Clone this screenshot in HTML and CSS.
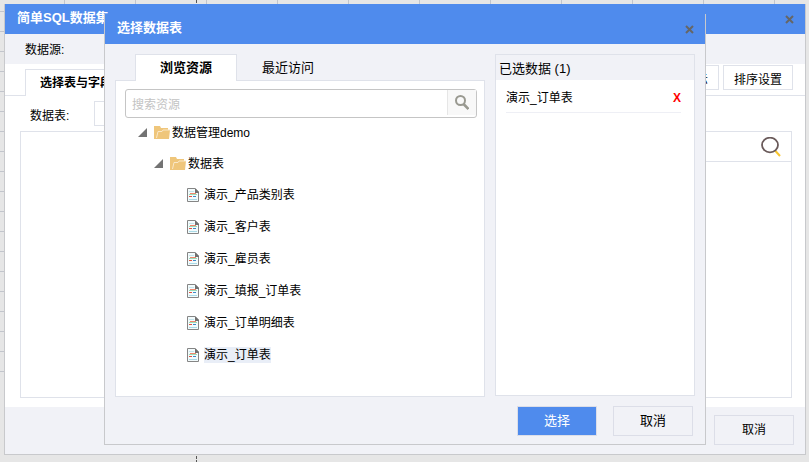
FILE: index.html
```html
<!DOCTYPE html>
<html lang="zh-CN">
<head>
<meta charset="utf-8">
<title>选择数据表</title>
<link rel="stylesheet" href="styles.css">
</head>
<body>
<svg class="sheet" aria-hidden="true">
  <defs>
    <pattern id="cols" x="64" width="71" height="4" patternUnits="userSpaceOnUse"><rect width="1" height="4" fill="#c2c5cc"/></pattern>
    <pattern id="rows" y="11" width="4" height="20" patternUnits="userSpaceOnUse"><rect width="4" height="1" fill="#c2c5cc"/></pattern>
  </defs>
  <rect x="60" width="100%" height="4" fill="url(#cols)"/>
  <rect width="4" height="372" fill="url(#rows)"/>
  <path d="M196.500 0V462" stroke="#555" stroke-dasharray="3 1"/>
</svg>

<main class="dialog dataset">
  <header class="titlebar">
    <h1>简单SQL数据集</h1>
    <button class="close" aria-label="关闭"><svg viewBox="0 0 9 9"><path d="M1 1l7 7M8 1L1 8"/></svg></button>
  </header>
  <div class="source">数据源:</div>
  <div class="workspace">
    <div class="main-tabs">
      <button class="main-tab">选择表与字段</button>
      <div class="actions">
        <button>仅显示</button>
        <button>排序设置</button>
      </div>
    </div>
    <div class="table-field">
      <label for="table">数据表:</label>
      <input id="table" type="text">
    </div>
    <div class="fields">
      <section class="fields-list"></section>
      <section class="fields-chosen">
        <div class="fields-head">
          <button aria-label="搜索"><svg viewBox="0 0 20 20"><path d="M14 13.500l5 5.500" stroke="#f7c52f" stroke-width="2"/><ellipse cx="9" cy="8" rx="8" ry="7.300" fill="none" stroke="#6a5a5a" stroke-width="1.800"/></svg></button>
        </div>
      </section>
    </div>
  </div>
  <footer class="outer-footer"><button class="btn">取消</button></footer>
</main>

<div class="dialog picker" role="dialog" aria-labelledby="picker-title">
  <header class="titlebar">
    <h2 id="picker-title">选择数据表</h2>
    <button class="close" aria-label="关闭"><svg viewBox="0 0 9 9"><path d="M1 1l7 7M8 1L1 8"/></svg></button>
  </header>
  <div class="picker-body">
    <section class="browse">
      <div class="tabs">
        <button class="tab active">浏览资源</button>
        <button class="tab">最近访问</button>
      </div>
      <div class="pane">
        <div class="search">
          <input type="text" placeholder="搜索资源" aria-label="搜索资源">
          <button aria-label="搜索"><svg viewBox="0 0 14 15"><circle cx="5.500" cy="5.500" r="4.500" fill="none" stroke="#999990" stroke-width="2"/><path d="M8.500 9l5 5" stroke="#999990" stroke-width="2.600"/></svg></button>
        </div>
        <ul class="tree">
          <li>
            <div class="node folder"><svg class="arrow" viewBox="0 0 9 9"><path d="M9 0v9H0z"/></svg><svg class="folder-icon" viewBox="0 0 16 13"><path class="folder-fill" d="M0 0h6l1 2h7v2h2l-1 9H0z"/><path class="folder-line" d="M2.500 12L4 5.500h4l1-1.500h7"/></svg><span>数据管理demo</span></div>
            <ul>
              <li>
                <div class="node folder"><svg class="arrow" viewBox="0 0 9 9"><path d="M9 0v9H0z"/></svg><svg class="folder-icon" viewBox="0 0 16 13"><path class="folder-fill" d="M0 0h6l1 2h7v2h2l-1 9H0z"/><path class="folder-line" d="M2.500 12L4 5.500h4l1-1.500h7"/></svg><span>数据表</span></div>
                <ul>
                  <li class="node"><svg class="file-icon"><use href="#file"/></svg><span>演示_产品类别表</span></li>
                  <li class="node"><svg class="file-icon"><use href="#file"/></svg><span>演示_客户表</span></li>
                  <li class="node"><svg class="file-icon"><use href="#file"/></svg><span>演示_雇员表</span></li>
                  <li class="node"><svg class="file-icon"><use href="#file"/></svg><span>演示_填报_订单表</span></li>
                  <li class="node"><svg class="file-icon"><use href="#file"/></svg><span>演示_订单明细表</span></li>
                  <li class="node selected"><svg class="file-icon"><use href="#file"/></svg><span>演示_订单表</span></li>
                </ul>
              </li>
            </ul>
          </li>
        </ul>
      </div>
    </section>
    <section class="chosen">
      <h3>已选数据 (1)</h3>
      <ul>
        <li><span>演示_订单表</span><button aria-label="移除">X</button></li>
      </ul>
    </section>
  </div>
  <footer class="picker-footer">
    <button class="btn primary">选择</button>
    <button class="btn">取消</button>
  </footer>
</div>

<svg class="symbols" aria-hidden="true">
  <symbol id="file" viewBox="0 0 12 14">
    <path d="M.5.5H8L11.500 4v9.500H.5z" fill="#f3fbfc" stroke="#858585"/>
    <path d="M8 0l4 4v1H8z" fill="#707070"/>
    <path d="M2 3.500h5" stroke="#c4e4ec"/>
    <path d="M3 5.500h6" stroke="#f0866c"/>
    <path d="M2 6.500h8" stroke="#9adbb6"/>
    <path d="M2 8.500h3" stroke="#e2503f"/>
    <path d="M6 8.500h3" stroke="#3f86c6"/>
    <path d="M2 11.500h8" stroke="#a9d9e6"/>
  </symbol>
</svg>
</body>
</html>
```
FILE: styles.css
```css
* { box-sizing: border-box; }

body {
  margin: 0;
  min-height: 100vh;
  padding: 4px 3px 7px 4px;
  display: flex;
  position: relative;
  background: #e6e6e6;
  color: #000;
  font: 12px/16px "Liberation Sans", "Noto Sans CJK SC", sans-serif;
}

button, input { font: inherit; color: inherit; }
button { padding: 0; border: 0; background: none; white-space: nowrap; }
h1, h2, h3, ul { margin: 0; padding: 0; }
ul { list-style: none; }
svg { display: block; }

.sheet { position: absolute; top: 0; left: 0; width: 100%; height: 100%; }
.symbols { position: absolute; width: 0; height: 0; }

.dialog {
  display: flex;
  flex-direction: column;
  background: #f1f2f7;
  border: 1px solid #c8c9cc;
  border-top: 0;
}

.dataset { flex: 1; position: relative; }

.picker {
  position: absolute;
  top: 14px;
  right: 103px;
  bottom: 17px;
  left: 104px;
}

.titlebar {
  flex: none;
  height: 30px;
  padding: 0 11px 0 12px;
  display: flex;
  align-items: center;
  justify-content: space-between;
  background: #4f8bed;
  color: #fff;
}

.titlebar h1, .titlebar h2 { padding-bottom: 2px; font-size: 13px; line-height: 20px; font-weight: bold; }
.close svg { width: 9px; height: 9px; stroke: #666; stroke-width: 2; }

.source { height: 30px; padding: 8px 20px; }

.workspace {
  flex: 1;
  display: flex;
  flex-direction: column;
  padding-bottom: 9px;
  background: #fff;
}

.main-tabs {
  height: 32px;
  padding: 0 12px 0 20px;
  display: flex;
  align-items: flex-end;
  justify-content: space-between;
  border-bottom: 1px solid #dfe2ea;
}

.main-tab {
  height: 27px;
  padding: 0 14px;
  margin-bottom: -1px;
  background: #fff;
  border: 1px solid #dfe2ea;
  border-bottom: 0;
  font-weight: bold;
}

.actions { display: flex; gap: 4px; align-self: flex-start; padding-top: 1px; }
.actions button { height: 25px; padding: 4px 10px 0; border: 1px solid #dfe2ea; }

.table-field { height: 35px; padding: 5px 25px; display: flex; gap: 25px; }
.table-field label { padding-top: 7px; }
.table-field input { width: 160px; height: 25px; border: 1px solid #dfe2ea; }

.fields {
  flex: 1;
  margin: 0 13px 0 15px;
  display: grid;
  grid-template-columns: 1fr 1fr;
  gap: 10px;
}
.fields section { border: 1px solid #dfe2ea; }

.fields-head {
  height: 30px;
  padding: 3px 10px;
  display: flex;
  justify-content: flex-end;
  border-bottom: 1px solid #dfe2ea;
}
.fields-head svg { width: 20px; height: 20px; }

.outer-footer { height: 47px; padding: 8px 11px; display: flex; justify-content: flex-end; }

.btn { width: 80px; height: 30px; border: 1px solid #dcdee8; }
.primary { background: #4f8bed; color: #fff; }

.picker-body {
  flex: 1;
  padding: 10px 10px 0;
  display: grid;
  grid-template-columns: 370fr 200fr;
  gap: 10px;
}

.browse { display: flex; flex-direction: column; }
.tabs { display: flex; padding-left: 20px; position: relative; }
.tab { width: 102px; height: 27px; margin-bottom: -1px; font-size: 13px; }
.tab.active { background: #fff; border: 1px solid #dfe2ea; border-bottom: 0; font-weight: bold; }

.pane { flex: 1; padding: 8px 7px 8px 9px; background: #fff; border: 1px solid #dfe2ea; }

.search {
  height: 29px;
  display: flex;
  border: 1px solid #c5c5c5;
  border-radius: 3px;
}
.search input { flex: 1; min-width: 0; padding: 2px 6px 0; border: 0; background: none; outline: 0; }
.search input::placeholder { color: #c3c3c3; opacity: 1; }
.search button {
  width: 29px;
  padding: 0 7px;
  margin-bottom: 2px;
  background: #f8f8f8;
  border-left: 1px solid #e6e6e6;
}
.search svg { width: 14px; height: 15px; }

.tree { margin-top: -1px; }
.tree .node { height: 32px; display: flex; align-items: center; }
.tree .folder { height: 31px; padding-left: 13px; }
.tree ul .folder { padding-left: 29px; }
.tree li.node { gap: 5px; padding-left: 62px; }
.arrow { width: 9px; height: 9px; margin-right: 7px; fill: #737373; }
.folder-icon { width: 16px; height: 13px; margin-right: 2px; }
.folder-fill { fill: #efc67b; }
.folder-line { fill: none; stroke: #fae8c8; }
.file-icon { width: 12px; height: 14px; }
.selected span { background: #e9eef7; }

.chosen { margin-bottom: 1px; background: #fff; border: 1px solid #dfe2ea; }
.chosen h3 {
  height: 25px;
  padding: 0 3px;
  background: #f1f2f7;
  font-size: 13px;
  line-height: 27px;
  font-weight: normal;
}
.chosen li {
  height: 33px;
  padding-top: 3px;
  margin: 0 13px 0 10px;
  display: flex;
  align-items: center;
  justify-content: space-between;
  border-bottom: 1px solid #eeeff5;
}
.chosen li button { color: #f00; font-weight: bold; }

.picker-footer {
  height: 47px;
  padding: 9px 12px 0;
  display: flex;
  justify-content: flex-end;
  gap: 16px;
}
.picker-footer .btn { font-size: 13px; }
```
